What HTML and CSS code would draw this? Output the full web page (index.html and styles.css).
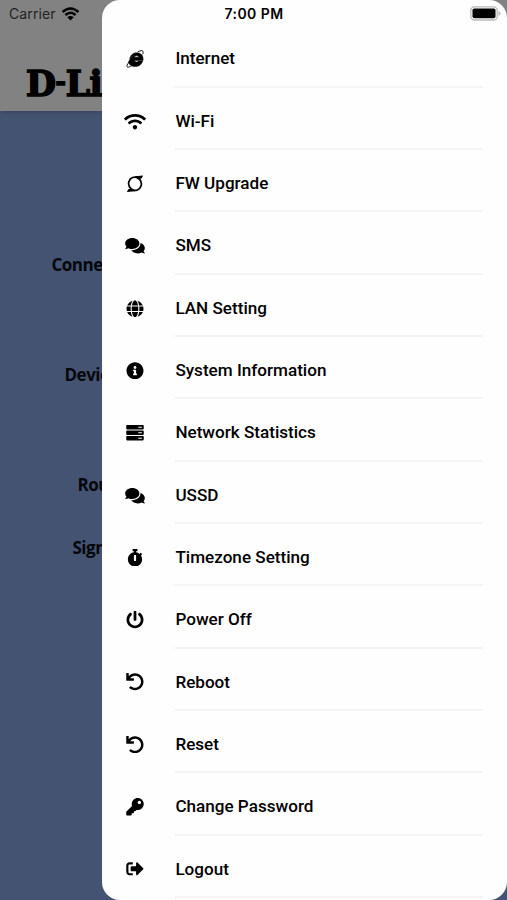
FILE: index.html
```html
<!DOCTYPE html>
<html lang="en">
<head>
  <meta charset="UTF-8">
  <meta name="viewport" content="width=device-width, initial-scale=1.0">
  <title>D-Link</title>
  <link rel="stylesheet" href="styles.css">
</head>
<body>
  <main class="home">
    <header class="home-header">
      <div class="logo"><span>D</span><span class="logo-dash">-</span><span>Li</span></div>
    </header>
    <section class="home-info">
      <div class="info-label connection">Conne</div>
      <div class="info-label device">Devic</div>
      <div class="info-label router">Rou</div>
      <div class="info-label signal">Sign</div>
    </section>
  </main>

  <nav class="drawer">
    <ul class="menu">
      <li>
        <svg class="icon" viewBox="0 0 512 512"><path class="browser-e" d="M480 325H355c-24 42-108 36-113-15h250c17-147-58-228-186-228-105 0-190 75-205 178 51-55 89-84 132-105C150 205 72 308 62 364c35 87 119 125 225 121 94-4 166-64 193-160zM243 215c7-57 112-58 120 0z"/><path class="orbit" d="M335 57C413 15 468 8 486 34c12 18 10 53-5 93M88 350C17 433 1 487 36 499c29 9 68-7 113-32"/></svg>
        <span>Internet</span>
      </li>
      <li>
        <svg class="icon wide" viewBox="0 0 640 512"><path d="M634.900 154.900C457.700-9 182.200-8.900 5.100 154.900c-6.700 6.200-6.800 16.600-.4 23l34.200 34c6.100 6.100 15.900 6.200 22.400.4 145.900-133.700 371.300-133.700 517.300 0 6.400 5.900 16.300 5.700 22.400-.4l34.200-34c6.500-6.500 6.400-16.800-.3-23zM320 352c-35.400 0-64 28.700-64 64s28.600 64 64 64 64-28.700 64-64-28.700-64-64-64zm202.700-83.600c-115.300-101.900-290.200-101.800-405.300 0-6.900 6.100-7.100 16.700-.6 23.100l34.400 34c6 5.900 15.700 6.300 22.100.8 84-72.600 209.700-72.400 293.500 0 6.400 5.500 16.100 5.200 22.100-.8l34.400-34c6.500-6.500 6.300-17-.6-23.100z"/></svg>
        <span>Wi-Fi</span>
      </li>
      <li>
        <svg class="icon line" viewBox="0 0 512 512"><path d="M350 85C240 25 110 80 77 195c-24 89 9 170 75 222M162 427c110 60 240 5 273-110 24-89-9-170-75-222"/><path class="fill" d="M255 37 493 14l-38 82-110 32zM257 475 19 498l38-82 110-32z"/></svg>
        <span>FW Upgrade</span>
      </li>
      <li>
        <svg class="icon chat" viewBox="0 0 576 512"><path d="M416 192c0-88.400-93.100-160-208-160S0 103.600 0 192c0 34.300 14.100 65.900 38 92-13.400 30.200-35.500 54.200-35.800 54.500-2.200 2.300-2.800 5.700-1.500 8.700S4.800 352 8 352c36.600 0 66.900-12.300 88.700-25 32.200 15.700 70.300 25 111.300 25 114.900 0 208-71.600 208-160zm122 220c23.900-26 38-57.700 38-92 0-66.900-53.500-124.200-129.300-148.100.9 6.600 1.300 13.300 1.300 20.100 0 105.900-107.700 192-240 192-10.800 0-21.300-.8-31.700-1.900C207.800 439.600 281.800 480 368 480c41 0 79.100-9.200 111.300-25 21.800 12.700 52.100 25 88.700 25 3.200 0 6.100-1.900 7.300-4.800 1.300-2.900.7-6.300-1.500-8.700-.3-.3-22.400-24.200-35.800-54.500z"/></svg>
        <span>SMS</span>
      </li>
      <li>
        <svg class="icon" viewBox="0 0 496 512"><path d="M336.500 160C322 70.700 287.800 8 248 8s-74 62.700-88.500 152h177zM152 256c0 22.200 1.200 43.500 3.300 64h185.300c2.100-20.500 3.300-41.800 3.300-64s-1.200-43.500-3.300-64H155.300c-2.100 20.500-3.300 41.800-3.300 64zm324.700-96c-28.600-67.900-86.500-120.400-158-141.600 24.400 33.800 41.200 84.700 50 141.600h108zM177.200 18.400C105.800 39.600 47.800 92.100 19.300 160h108c8.700-56.900 25.500-107.800 49.900-141.600zM487.400 192H372.700c2.100 21 3.300 42.500 3.300 64s-1.200 43-3.300 64h114.600c5.500-20.500 8.600-41.800 8.600-64s-3.100-43.500-8.500-64zM120 256c0-21.500 1.200-43 3.300-64H8.600C3.200 212.500 0 233.800 0 256s3.200 43.500 8.600 64h114.600c-2-21-3.200-42.500-3.200-64zm39.500 96c14.500 89.300 48.700 152 88.500 152s74-62.700 88.500-152h-177zm159.300 141.600c71.400-21.200 129.400-73.700 158-141.600h-108c-8.800 56.900-25.600 107.800-50 141.600zM19.300 352c28.600 67.900 86.500 120.400 158 141.600-24.400-33.800-41.200-84.700-50-141.600h-108z"/></svg>
        <span>LAN Setting</span>
      </li>
      <li>
        <svg class="icon" viewBox="0 0 512 512"><path d="M256 8C119 8 8 119 8 256s111 248 248 248 248-111 248-248S393 8 256 8zm0 110c23.200 0 42 18.800 42 42s-18.800 42-42 42-42-18.800-42-42 18.800-42 42-42zm56 254c0 6.600-5.400 12-12 12h-88c-6.600 0-12-5.400-12-12v-24c0-6.600 5.400-12 12-12h12v-64h-12c-6.600 0-12-5.400-12-12v-24c0-6.600 5.400-12 12-12h64c6.600 0 12 5.400 12 12v100h12c6.600 0 12 5.400 12 12v24z"/></svg>
        <span>System Information</span>
      </li>
      <li>
        <svg class="icon" viewBox="0 0 512 512"><path fill-rule="evenodd" d="M24 32h464a24 24 0 0 1 24 24v80a24 24 0 0 1-24 24H24a24 24 0 0 1-24-24V56a24 24 0 0 1 24-24zM24 192h464a24 24 0 0 1 24 24v80a24 24 0 0 1-24 24H24a24 24 0 0 1-24-24v-80a24 24 0 0 1 24-24zM24 352h464a24 24 0 0 1 24 24v80a24 24 0 0 1-24 24H24a24 24 0 0 1-24-24v-80a24 24 0 0 1 24-24zM352 84v24h104V84zM352 244v24h104v-24zM352 404v24h104v-24z"/></svg>
        <span>Network Statistics</span>
      </li>
      <li>
        <svg class="icon chat" viewBox="0 0 576 512"><path d="M416 192c0-88.400-93.100-160-208-160S0 103.600 0 192c0 34.300 14.100 65.900 38 92-13.400 30.200-35.500 54.200-35.800 54.500-2.200 2.300-2.800 5.700-1.500 8.700S4.800 352 8 352c36.600 0 66.900-12.300 88.700-25 32.200 15.700 70.300 25 111.300 25 114.900 0 208-71.600 208-160zm122 220c23.900-26 38-57.700 38-92 0-66.900-53.500-124.200-129.300-148.100.9 6.600 1.300 13.300 1.300 20.100 0 105.900-107.700 192-240 192-10.800 0-21.300-.8-31.700-1.900C207.800 439.600 281.800 480 368 480c41 0 79.100-9.200 111.300-25 21.800 12.700 52.100 25 88.700 25 3.200 0 6.100-1.900 7.300-4.800 1.300-2.900.7-6.300-1.500-8.700-.3-.3-22.400-24.200-35.800-54.500z"/></svg>
        <span>USSD</span>
      </li>
      <li>
        <svg class="icon" viewBox="0 0 448 512"><path d="M432 304c0 114.900-93.100 208-208 208S16 418.900 16 304c0-104 76.300-190.200 176-205.500V64h-28c-6.600 0-12-5.400-12-12V12c0-6.600 5.400-12 12-12h120c6.600 0 12 5.400 12 12v40c0 6.600-5.400 12-12 12h-28v34.500c37.500 5.800 71.700 21.600 99.700 44.600l27.500-27.500c4.700-4.700 12.300-4.700 17 0l28.300 28.300c4.700 4.700 4.700 12.300 0 17l-29.400 29.400-.6.600C419.700 223.300 432 262.200 432 304zm-176 36V188.500c0-6.600-5.400-12-12-12h-40c-6.600 0-12 5.400-12 12V340c0 6.600 5.400 12 12 12h40c6.600 0 12-5.400 12-12z"/></svg>
        <span>Timezone Setting</span>
      </li>
      <li>
        <svg class="icon" viewBox="0 0 512 512"><path d="M400 54.100c63 45 104 118.600 104 201.900 0 136.800-110.800 247.700-247.500 248C120 504.300 8.200 393 8 256.400 7.900 173.100 48.900 99.300 111.800 54.200c11.700-8.300 28-4.800 35 7.700L162.600 90c5.900 10.500 3.100 23.800-6.600 31-41.500 30.800-68 79.600-68 134.900-.1 92.300 74.500 168.100 168 168.100 91.600 0 168.600-74.200 168-169.100-.3-51.800-24.700-101.800-68.100-134-9.700-7.200-12.400-20.500-6.500-30.900l15.800-28.100c7-12.400 23.200-16.100 34.800-7.800zM296 264V24c0-13.300-10.700-24-24-24h-32c-13.300 0-24 10.700-24 24v240c0 13.300 10.700 24 24 24h32c13.300 0 24-10.700 24-24z"/></svg>
        <span>Power Off</span>
      </li>
      <li>
        <svg class="icon" viewBox="0 0 512 512"><path d="M212.300 224.300H12c-6.600 0-12-5.400-12-12V12C0 5.400 5.400 0 12 0h48c6.600 0 12 5.400 12 12v78.100C117.800 39.300 184.300 7.500 258.200 8c136.900 1 246.400 111.600 246.200 248.500C504 393.300 393.100 504 256.300 504c-64.100 0-122.500-24.300-166.500-64.200-5.100-4.600-5.300-12.600-.5-17.400l34-34c4.500-4.500 11.700-4.700 16.400-.5C170.800 415.300 211.600 432 256.300 432c97.300 0 176-78.700 176-176 0-97.300-78.700-176-176-176-58.500 0-110.300 28.500-142.300 72.300h98.300c6.600 0 12 5.400 12 12v48c0 6.600-5.400 12-12 12z"/></svg>
        <span>Reboot</span>
      </li>
      <li>
        <svg class="icon" viewBox="0 0 512 512"><path d="M212.300 224.300H12c-6.600 0-12-5.400-12-12V12C0 5.400 5.400 0 12 0h48c6.600 0 12 5.400 12 12v78.100C117.800 39.300 184.300 7.500 258.200 8c136.900 1 246.400 111.600 246.200 248.500C504 393.300 393.100 504 256.300 504c-64.100 0-122.500-24.300-166.500-64.200-5.100-4.600-5.300-12.600-.5-17.400l34-34c4.500-4.500 11.700-4.700 16.400-.5C170.800 415.300 211.600 432 256.300 432c97.300 0 176-78.700 176-176 0-97.300-78.700-176-176-176-58.500 0-110.300 28.500-142.300 72.300h98.300c6.600 0 12 5.400 12 12v48c0 6.600-5.400 12-12 12z"/></svg>
        <span>Reset</span>
      </li>
      <li>
        <svg class="icon" viewBox="0 0 512 512"><path d="M512 176c0 97.200-78.800 176-176 176-11.200 0-22.200-1.100-32.800-3.100l-24 27a24 24 0 0 1-18 8.100H224v40c0 13.300-10.700 24-24 24h-40v40c0 13.300-10.700 24-24 24H24c-13.300 0-24-10.700-24-24v-78c0-6.400 2.500-12.500 7-17l161.800-161.800A175.800 175.800 0 0 1 160 176C160 78.800 238.800 0 336 0s176 78.500 176 176zM336 128c0 26.500 21.500 48 48 48s48-21.500 48-48-21.500-48-48-48-48 21.500-48 48z"/></svg>
        <span>Change Password</span>
      </li>
      <li>
        <svg class="icon" viewBox="0 0 512 512"><path d="m497 273-168 168c-15 15-41 4.500-41 -17v-96H152c-13.300 0-24-10.700-24-24v-96c0-13.300 10.700-24 24-24h136V88c0-21.400 25.900-32 41-17l168 168c9.300 9.400 9.300 24.600 0 34zM192 436v-40c0-6.600-5.400-12-12-12H96c-17.700 0-32-14.300-32-32V160c0-17.700 14.300-32 32-32h84c6.600 0 12-5.400 12-12V76c0-6.600-5.400-12-12-12H96c-53 0-96 43-96 96v192c0 53 43 96 96 96h84c6.600 0 12-5.400 12-12z"/></svg>
        <span>Logout</span>
      </li>
    </ul>
  </nav>

  <div class="status-bar">
    <div class="carrier">
      <span>Carrier</span>
      <svg class="signal-icon" viewBox="0 0 18 14"><path d="M1 5Q9-2 17 5M3.900 8Q9 3.600 14.100 8"/><path class="fill" d="M9 13.600 5.800 10.300Q9 7.600 12.200 10.300z"/></svg>
    </div>
    <div class="time">7:00 PM</div>
    <svg class="battery" viewBox="0 0 31 15"><rect class="shell" x=".8" y=".8" width="26.400" height="13.200" rx="3.600"/><rect x="2.500" y="2.500" width="23" height="9.800" rx="1.800"/><path class="cap" d="M28.500 5q2 .8 2 2.400t-2 2.400z"/></svg>
  </div>
</body>
</html>
```
FILE: styles.css
```css
* {
  box-sizing: border-box;
}

body {
  margin: 0;
  position: relative;
  height: 900px;
  overflow: hidden;
  background: #445372;
  font-family: Roboto, sans-serif;
  color: #000;
}

.home-header {
  height: 111px;
  padding: 63px 0 0 26px;
  background: #828282;
  box-shadow: 0 1px 5px rgba(0, 0, 0, 0.2);
}

.logo {
  display: flex;
  font: bold 34.500px/42px "DejaVu Serif", serif;
  letter-spacing: -0.500px;
  -webkit-text-stroke: 1.600px #000;
  white-space: nowrap;
}

.logo-dash {
  font-size: 25px;
  line-height: 37px;
  letter-spacing: 0;
}

.home-info {
  padding-top: 142px;
}

.info-label {
  height: 24px;
  font: bold 17px/24px "Open Sans", sans-serif;
  letter-spacing: -0.5px;
  color: #05070b;
}

.connection {
  margin-left: 51.500px;
}

.device {
  margin: 86px 0 0 64.500px;
}

.router {
  margin: 86px 0 0 77.500px;
}

.signal {
  margin: 39px 0 0 72.500px;
}

/* side menu over the home page */
.drawer {
  position: absolute;
  top: 0;
  left: 102px;
  right: 0;
  height: 900px;
  padding-top: 25.300px;
  overflow: hidden;
  background: #fefefe;
  border-radius: 18px;
}

.menu {
  margin: 0;
  padding: 0;
  list-style: none;
}

.menu li {
  display: flex;
  align-items: center;
  height: 62.330px;
  padding-left: 22px;
}

.menu span {
  flex: 1;
  height: 62.330px;
  margin: 0 24px 0 29.400px;
  padding-top: 5px;
  border-bottom: 2px solid #f4f4f4;
  font-size: 17.100px;
  font-weight: 500;
  line-height: 56px;
}

.icon {
  width: 22px;
  height: 17.500px;
  margin-top: 5px;
}

.icon.line {
  fill: none;
  stroke: #000;
  stroke-width: 50;
}

.icon .fill {
  fill: #000;
  stroke: none;
}

.icon .browser-e {
  stroke: #000;
  stroke-width: 14;
}

.icon .orbit {
  fill: none;
  stroke: #000;
  stroke-width: 26;
}

.status-bar {
  position: absolute;
  top: 0;
  left: 0;
  right: 0;
  display: grid;
  grid-template-columns: 1fr auto 1fr;
  align-items: center;
  height: 27px;
  padding: 0 6px 0 9px;
  font-family: Inter, sans-serif;
}

.carrier {
  display: flex;
  align-items: center;
  gap: 5px;
  font-size: 14px;
  letter-spacing: 0.1px;
  color: #222;
}

.signal-icon {
  width: 19px;
  height: 14px;
  fill: none;
  stroke: #000;
  stroke-width: 2.500;
}

.signal-icon .fill {
  fill: #000;
  stroke: none;
}

.time {
  margin-right: 2px;
  font-size: 14px;
  font-weight: 600;
  letter-spacing: 0.450px;
}

.battery {
  justify-self: end;
  width: 31px;
  height: 15px;
}

.battery .shell {
  fill: #fff;
  stroke: #b9b9b9;
  stroke-width: 1.300;
}

.battery .cap {
  fill: #b9b9b9;
}
```
